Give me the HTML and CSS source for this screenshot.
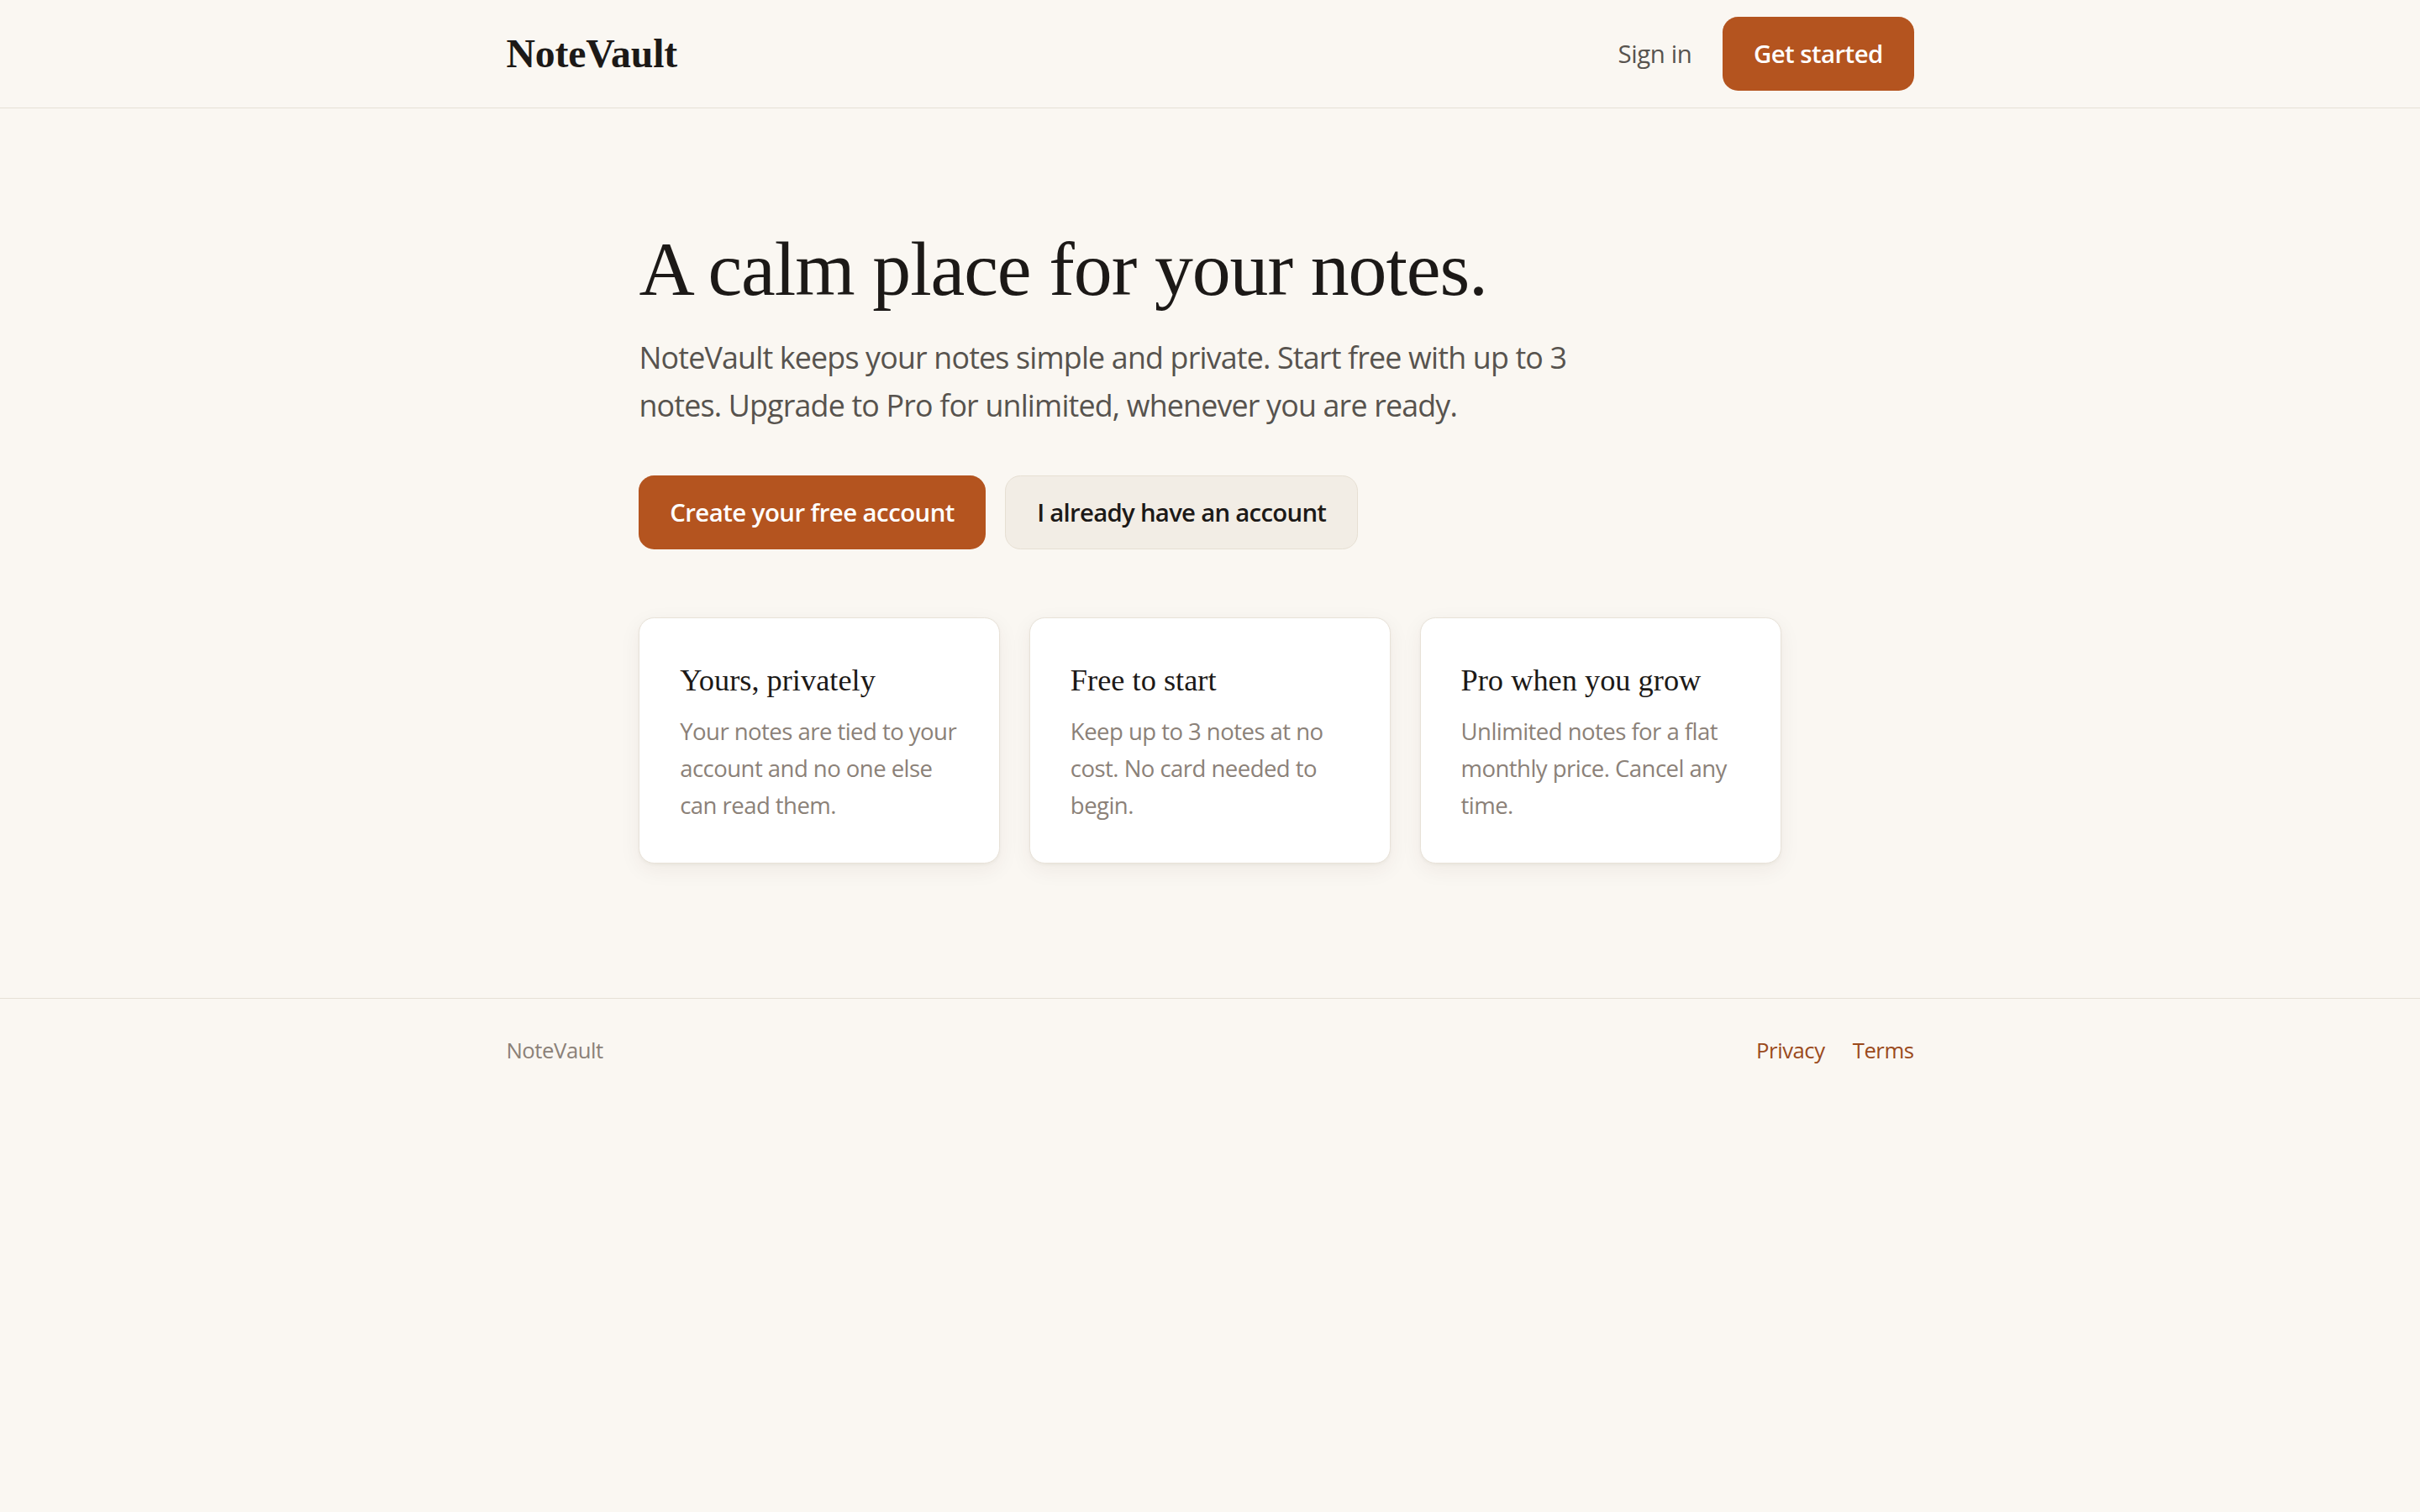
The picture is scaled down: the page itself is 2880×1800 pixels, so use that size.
FILE: index.html
```html
<!DOCTYPE html>
<html lang="en">
<head>
<meta charset="utf-8">
<title>NoteVault — A calm place for your notes</title>
<link rel="stylesheet" href="styles.css">
</head>
<body>
  <header class="site-header">
    <div class="container header-inner">
      <a class="logo" href="#">NoteVault</a>
      <nav class="header-actions">
        <a class="link-signin" href="#">Sign in</a>
        <a class="btn btn-primary" href="#">Get started</a>
      </nav>
    </div>
  </header>

  <main class="hero">
    <div class="hero-inner">
      <h1 class="hero-title">A calm place for your notes.</h1>
      <p class="hero-lead">NoteVault keeps your notes simple and private. Start free with up to 3 notes. Upgrade to Pro for unlimited, whenever you are ready.</p>
      <div class="cta-row">
        <a class="btn btn-primary" href="#">Create your free account</a>
        <a class="btn btn-secondary" href="#">I already have an account</a>
      </div>

      <section class="features">
        <article class="feature-card">
          <h2 class="feature-title">Yours, privately</h2>
          <p class="feature-text">Your notes are tied to your account and no one else can read them.</p>
        </article>
        <article class="feature-card">
          <h2 class="feature-title">Free to start</h2>
          <p class="feature-text">Keep up to 3 notes at no cost. No card needed to begin.</p>
        </article>
        <article class="feature-card">
          <h2 class="feature-title">Pro when you grow</h2>
          <p class="feature-text">Unlimited notes for a flat monthly price. Cancel any time.</p>
        </article>
      </section>
    </div>
  </main>

  <footer class="site-footer">
    <div class="container footer-inner">
      <span class="footer-brand">NoteVault</span>
      <nav class="footer-links">
        <a href="#">Privacy</a>
        <a href="#">Terms</a>
      </nav>
    </div>
  </footer>
</body>
</html>
```

FILE: styles.css
```css
html {
  zoom: 1.8367;
}

* {
  box-sizing: border-box;
}

body {
  margin: 0;
  background: #faf7f2;
  color: #1c1917;
  font-family: "Segoe UI", "Open Sans", "Noto Sans", sans-serif;
  -webkit-font-smoothing: antialiased;
}

a {
  text-decoration: none;
  color: inherit;
}

.container {
  max-width: 960px;
  margin: 0 auto;
  padding: 0 24px;
}

/* ---------- Header ---------- */
.site-header {
  border-bottom: 1px solid #e6e0d6;
}

.header-inner {
  height: 69.5px;
  display: flex;
  align-items: center;
  justify-content: space-between;
}

.logo {
  font-family: "Liberation Serif", "DejaVu Serif", serif;
  font-weight: 700;
  font-size: 26px;
  letter-spacing: -0.1px;
  color: #1c1917;
}

.header-actions {
  display: flex;
  align-items: center;
  gap: 8px;
}

.link-signin {
  padding: 8px 12px;
  font-size: 16px;
  color: #57534e;
  letter-spacing: -0.2px;
}

/* ---------- Buttons ---------- */
.btn {
  display: inline-flex;
  align-items: center;
  justify-content: center;
  height: 48px;
  padding: 0 20px;
  border-radius: 10px;
  font-size: 16px;
  font-weight: 600;
  letter-spacing: -0.3px;
}

.btn-primary {
  background: #b4541f;
  color: #ffffff;
}

.btn-secondary {
  background: #f2ede5;
  color: #1c1917;
  border: 1px solid #e6dfd3;
  letter-spacing: -0.4px;
}

/* ---------- Hero ---------- */
.hero {
  padding: 77px 24px 87px;
}

.hero-inner {
  max-width: 740px;
  margin: 0 auto;
}

.hero-title {
  margin: 0 0 14px;
  font-family: "Liberation Serif", "DejaVu Serif", serif;
  font-weight: 400;
  font-size: 50px;
  line-height: 1.1;
  letter-spacing: -0.6px;
  color: #1c1917;
}

.hero-lead {
  margin: 0 0 30px;
  max-width: 620px;
  font-size: 19.5px;
  line-height: 31px;
  color: #57534e;
  letter-spacing: -0.45px;
}

.cta-row {
  display: flex;
  gap: 13px;
  margin-bottom: 44px;
}

/* ---------- Feature cards ---------- */
.features {
  display: grid;
  grid-template-columns: repeat(3, 1fr);
  gap: 19px;
}

.feature-card {
  background: #ffffff;
  border: 1px solid #e8e2d8;
  border-radius: 10px;
  padding: 28px 24px 25px 26px;
  box-shadow: 0 4px 14px rgba(60, 40, 20, 0.06), 0 1px 2px rgba(60, 40, 20, 0.04);
}

.feature-title {
  margin: 0 0 8px;
  font-family: "Liberation Serif", "DejaVu Serif", serif;
  font-weight: 400;
  font-size: 19.8px;
  line-height: 1.3;
  color: #1c1917;
}

.feature-text {
  margin: 0;
  font-size: 15px;
  line-height: 24px;
  color: #8b8178;
  letter-spacing: -0.3px;
}

/* ---------- Footer ---------- */
.site-footer {
  border-top: 1px solid #e6e0d6;
}

.footer-inner {
  display: flex;
  align-items: center;
  justify-content: space-between;
  padding-top: 24px;
  padding-bottom: 23px;
  font-size: 14px;
  line-height: 20px;
  letter-spacing: -0.25px;
}

.footer-brand {
  color: #8b8178;
}

.footer-links {
  display: flex;
  gap: 18px;
}

.footer-links a {
  color: #9a4a1c;
}
```
